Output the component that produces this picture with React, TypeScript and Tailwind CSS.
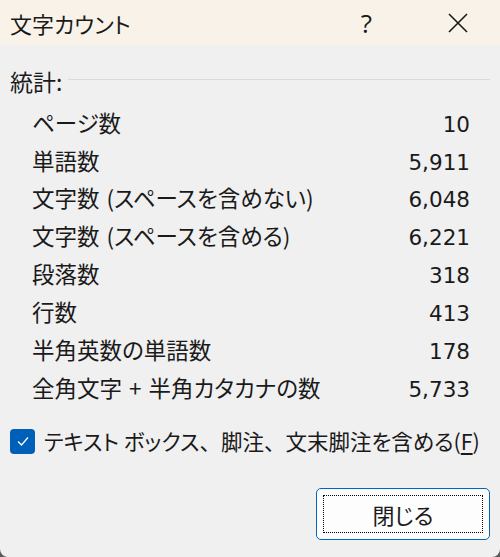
const stats = [
  { label: 'ページ数', value: '10' },
  { label: '単語数', value: '5,911' },
  { label: '文字数 (スペースを含めない)', value: '6,048' },
  { label: '文字数 (スペースを含める)', value: '6,221' },
  { label: '段落数', value: '318' },
  { label: '行数', value: '413' },
  { label: '半角英数の単語数', value: '178' },
  { label: '全角文字 + 半角カタカナの数', value: '5,733' },
];

const jp = "font-['Noto_Sans_CJK_JP',sans-serif] [font-feature-settings:'palt']";
const num = "font-['DejaVu_Sans',sans-serif]";

// 読点は全角幅のまま
const Comma = () => <span className="[font-feature-settings:normal]">、</span>;

export default function App() {
  return (
    <div className={`h-[557px] w-[500px] bg-[#5a5a5a] text-[#1a1a1a] ${jp}`}>
      <div className="flex h-full flex-col overflow-hidden rounded-b-[8px] bg-[#f0f0f0]">
        <header className="flex h-[45px] items-center bg-[#f9f2e8] pl-[10px]">
          <h1 className="text-[22px] leading-none">文字カウント</h1>
          <span className="ml-auto mr-[75px] font-['Open_Sans',sans-serif] text-[26px] leading-none">?</span>
          <svg width="22" height="22" viewBox="0 0 22 22" className="mr-[31px]">
            <path d="M2 2 L20 20 M20 2 L2 20" stroke="#1a1a1a" strokeWidth="1.6" />
          </svg>
        </header>

        <div className="flex flex-1 flex-col pt-[17px]">
          <div className="flex h-[38px] items-center px-[10px]">
            <span className="text-[23px] leading-none">統計:</span>
            <div className="ml-[6px] mt-[-4px] h-px flex-1 bg-[#dadada]" />
          </div>

          <ul className="mt-[4px]">
            {stats.map((row) => (
              <li key={row.label} className="flex h-[37.9px] items-center pl-[32px] pr-[30px]">
                <div className="flex w-full items-baseline justify-between leading-none">
                  <span className="text-[22.5px] [word-spacing:2px]">{row.label}</span>
                  <span className={`text-[21.5px] ${num}`}>{row.value}</span>
                </div>
              </li>
            ))}
          </ul>

          <label className="mt-[15px] flex h-[38px] items-center gap-[9px] pl-[10px] text-[21.5px] leading-none">
            <span className="flex h-[25px] w-[25px] shrink-0 items-center justify-center rounded-[4px] bg-[#005fb8]">
              <svg width="14" height="14" viewBox="0 0 14 14">
                <path d="M2 7.5 L5.5 11 L12 3.5" fill="none" stroke="#fff" strokeWidth="1.3" />
              </svg>
            </span>
            <span className="whitespace-nowrap">
              テキスト ボックス<Comma />脚注<Comma />文末脚注を含める(<span className="underline underline-offset-[3px]">F</span>)
            </span>
          </label>

          <div className="mt-[28px] flex justify-end pr-[10px]">
            <button className="h-[52px] w-[174px] rounded-[5px] border border-[#0067c0] bg-[#fdfdfd] p-[6px]">
              <span className="flex h-full w-full items-center justify-center border border-dotted border-black text-[22px] leading-none">
                閉じる
              </span>
            </button>
          </div>
        </div>
      </div>
    </div>
  );
}
